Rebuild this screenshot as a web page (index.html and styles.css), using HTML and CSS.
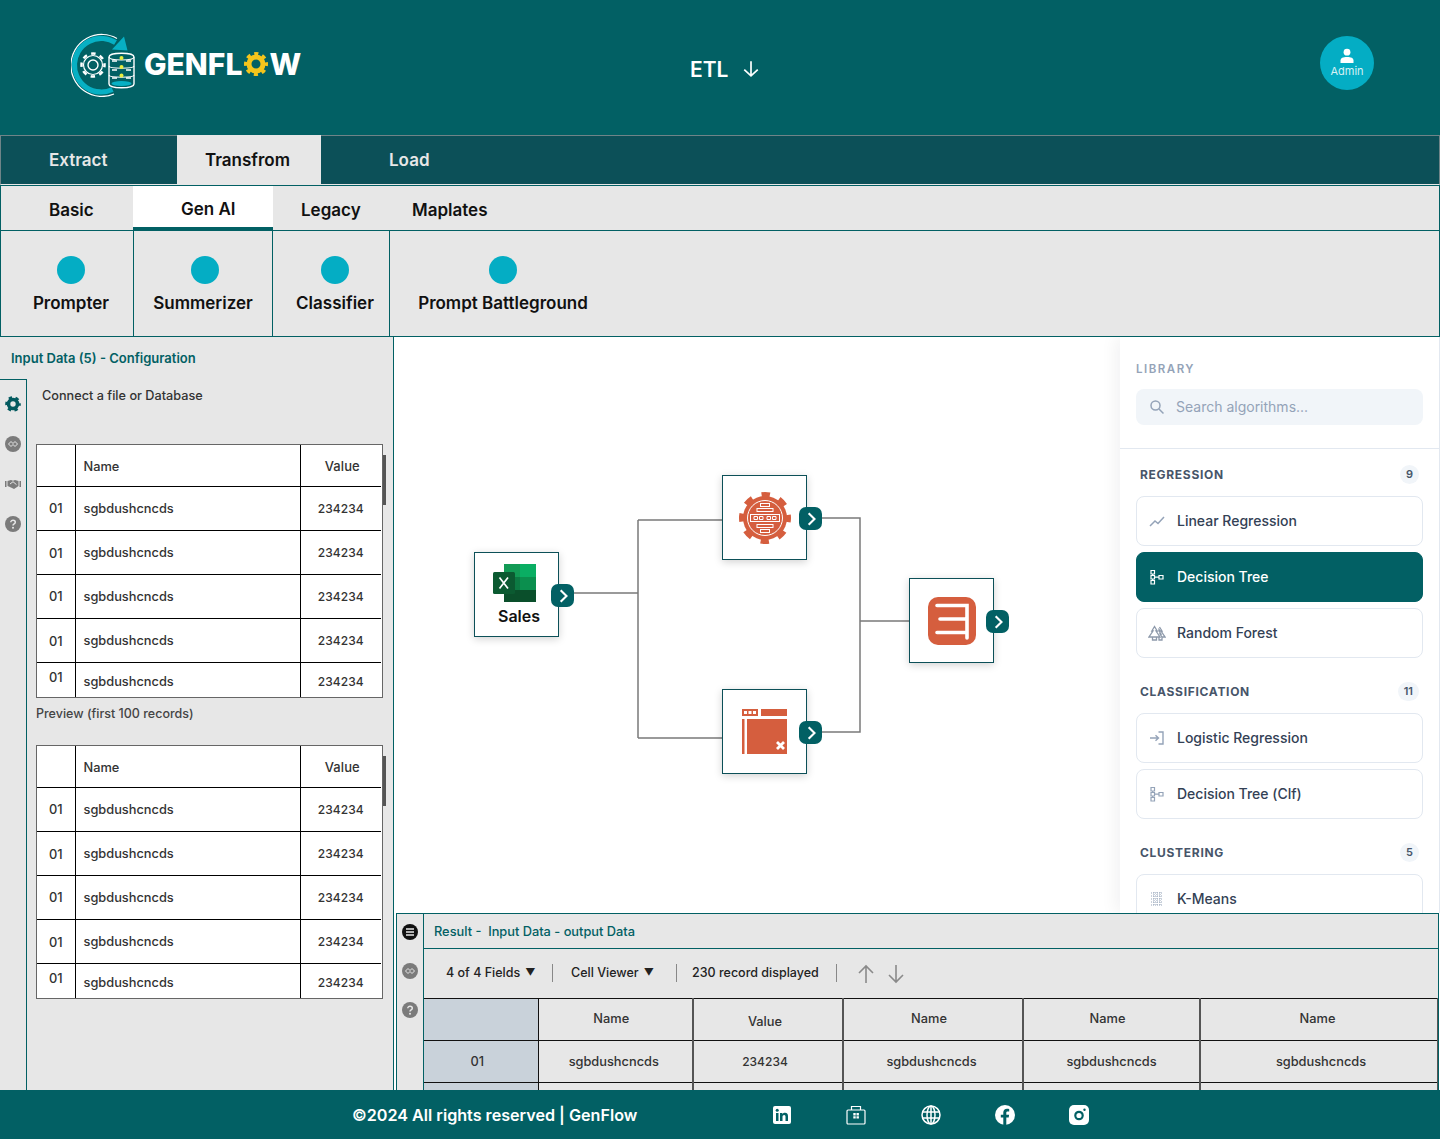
FILE: index.html
```html
<!DOCTYPE html>
<html lang="en">
<head>
	<meta charset="UTF-8">
	<title>GenFlow - ETL</title>
	<link rel="stylesheet" href="styles.css">
</head>
<body>
<div class="app">
	<header class="top">
		<a class="logo" href="#">
			<svg class="logo-mark" viewBox="0 0 64 64" width="64" height="64" fill="none">
				<path d="M43 61A31 31 0 1 1 46 5.400" stroke="#fff" stroke-width="1.200"/>
				<path d="M41.500 56.500A26.800 26.800 0 1 1 44.500 9.500" stroke="#07b0c4" stroke-width="5.200"/>
				<path d="M53 3.500 56.500 17.500 41 16.500Z" fill="#07b0c4"/>
				<circle cx="22" cy="32" r="9.500" stroke="#fff" stroke-width="1.200"/>
				<circle cx="22" cy="32" r="11.500" stroke="#fff" stroke-width="2.500" stroke-dasharray="4.500 4.530" stroke-dashoffset="2.200"/>
				<circle cx="22" cy="32" r="5" stroke="#fff" stroke-width="1.400"/>
				<path d="M38 24c0-5 25-5 25 0v27c0 5-25 5-25 0Z" stroke="#fff" stroke-width="1.400" fill="#026064"/>
				<path d="M38 24c0 4 25 4 25 0M38 33c0 3 25 3 25 0M38 42c0 3 25 3 25 0" stroke="#fff" stroke-width="1.100"/>
				<path d="M41 28h5M55 28h5M41 37h5M55 37h5M41 45h5M55 45h5" stroke="#fff" stroke-width="1.300"/>
				<circle cx="50.500" cy="25" r="2" fill="#e9ee3f"/>
				<circle cx="50.500" cy="34" r="2" fill="#e9ee3f"/>
				<circle cx="50.500" cy="42.500" r="2" fill="#e9ee3f"/>
				<ellipse cx="50.500" cy="50.500" rx="10" ry="2.600" fill="#07b0c4"/>
			</svg>
			<span class="logo-text">GENFL<svg class="logo-gear" viewBox="0 0 24 24" width="24" height="24" fill="none">
				<circle cx="12" cy="12" r="7" stroke="#f4c51c" stroke-width="5"/>
				<circle cx="12" cy="12" r="10" stroke="#f4c51c" stroke-width="4" stroke-dasharray="4 3.850" stroke-dashoffset="2"/>
			</svg>W</span>
		</a>
		<div class="etl">
			<span>ETL</span>
			<svg viewBox="0 0 16 16" width="18" height="18" fill="none" stroke="#fff" stroke-width="1.500"><path d="M8 1v13M2 8.500 8 14l6-5.500"/></svg>
		</div>
		<div class="admin">
			<svg viewBox="0 0 16 16" width="16" height="16" fill="#fff"><circle cx="8" cy="4.200" r="3.400"/><path d="M1.500 15v-2.500C1.500 10 4 9 8 9s6.500 1 6.500 3.500V15Z"/></svg>
			<span>Admin</span>
		</div>
	</header>

	<nav class="main-tabs">
		<a class="main-tab tab-extract" href="#">Extract</a>
		<a class="main-tab tab-transform active" href="#">Transfrom</a>
		<a class="main-tab tab-load" href="#">Load</a>
	</nav>

	<nav class="sub-tabs">
		<a class="sub-tab tab-basic" href="#">Basic</a>
		<a class="sub-tab tab-genai active" href="#">Gen AI</a>
		<a class="sub-tab tab-legacy" href="#">Legacy</a>
		<a class="sub-tab" href="#">Maplates</a>
	</nav>

	<div class="tools">
		<div class="tool tool-1"><i class="dot"></i><span>Prompter</span></div>
		<div class="tool tool-2"><i class="dot"></i><span>Summerizer</span></div>
		<div class="tool tool-3"><i class="dot"></i><span>Classifier</span></div>
		<div class="tool tool-4"><i class="dot"></i><span>Prompt Battleground</span></div>
	</div>

	<main class="main">
		<aside class="config">
			<h2 class="config-title">Input Data (5) - Configuration</h2>
			<div class="config-body">
				<div class="rail">
					<svg class="ico" viewBox="0 0 16 16"><circle cx="8" cy="8" r="4.500" fill="none" stroke="#035a5f" stroke-width="3.600"/><circle cx="8" cy="8" r="6.300" fill="none" stroke="#035a5f" stroke-width="3" stroke-dasharray="3.200 3.400" stroke-dashoffset="1.600"/></svg>
					<svg class="ico" viewBox="0 0 16 16"><circle cx="8" cy="8" r="8" fill="#7b7b7b"/><path d="M3.500 8 6 5.500 8 7.500 10 5.500 12.500 8 10 10.500 8 8.500 6 10.500Z" fill="none" stroke="#e7e7e7" stroke-width="1"/></svg>
					<svg class="ico" viewBox="0 0 16 16"><path d="M0 5h1.500v6H0ZM14.500 5H16v6h-1.500Z" fill="#7b7b7b"/><path d="M2.500 5 6 4l2 .8L10 4l3.500 1v5L9 13 6 11.500 2.500 10Z" fill="#7b7b7b"/><path d="M5 8l3-2.300 3.500 3" fill="none" stroke="#e7e7e7" stroke-width="1"/></svg>
					<svg class="ico" viewBox="0 0 16 16"><circle cx="8" cy="8" r="8" fill="#7b7b7b"/><path d="M5.800 6.200C5.800 3.600 10.300 3.700 10.300 6.200 10.300 7.900 8 7.700 8 9.500" fill="none" stroke="#e7e7e7" stroke-width="1.500"/><circle cx="8" cy="11.800" r="1" fill="#e7e7e7"/></svg>
				</div>
				<div class="config-main">
					<p class="connect">Connect a file or Database</p>
					<div class="grid-box">
						<div class="grid-clip">
							<table class="grid">
								<tr class="head"><th></th><th class="left">Name</th><th>Value</th></tr>
								<tr><td>01</td><td class="left">sgbdushcncds</td><td>234234</td></tr>
								<tr><td class="low">01</td><td class="left">sgbdushcncds</td><td>234234</td></tr>
								<tr><td>01</td><td class="left">sgbdushcncds</td><td>234234</td></tr>
								<tr><td class="low">01</td><td class="left">sgbdushcncds</td><td>234234</td></tr>
								<tr class="cut"><td class="high">01</td><td class="left">sgbdushcncds</td><td>234234</td></tr>
							</table>
						</div>
						<i class="thumb"></i>
					</div>
					<p class="preview">Preview (first 100 records)</p>
					<div class="grid-box">
						<div class="grid-clip">
							<table class="grid">
								<tr class="head"><th></th><th class="left">Name</th><th>Value</th></tr>
								<tr><td>01</td><td class="left">sgbdushcncds</td><td>234234</td></tr>
								<tr><td class="low">01</td><td class="left">sgbdushcncds</td><td>234234</td></tr>
								<tr><td>01</td><td class="left">sgbdushcncds</td><td>234234</td></tr>
								<tr><td class="low">01</td><td class="left">sgbdushcncds</td><td>234234</td></tr>
								<tr class="cut"><td class="high">01</td><td class="left">sgbdushcncds</td><td>234234</td></tr>
							</table>
						</div>
						<i class="thumb"></i>
					</div>
				</div>
			</div>
		</aside>

		<section class="work">
			<div class="canvas">
				<svg class="wires" width="1046" height="576" fill="none" stroke="#7a7a7a" stroke-width="1.500">
					<path d="M180 256H244M244 183V401M244 183H328M244 401H328"/>
					<path d="M427 181H466V395H427M466 284H515"/>
				</svg>

				<div class="node node-sales">
					<svg class="excel" viewBox="0 0 43 38" width="43" height="38">
						<rect x="11" width="16" height="13" fill="#129a55"/>
						<rect x="27" width="16" height="13" fill="#0aae63"/>
						<rect x="11" y="13" width="16" height="13" fill="#0c7a43"/>
						<rect x="27" y="13" width="16" height="13" fill="#0b8f4e"/>
						<rect x="11" y="26" width="32" height="12" fill="#0a4f2b"/>
						<rect y="8" width="22" height="22" rx="1.500" fill="#0b5a31"/>
						<path d="M6.500 13.500l8.500 11M15 13.500l-8.500 11" stroke="#fff" stroke-width="1.700"/>
					</svg>
					<span>Sales</span>
					<a class="port" href="#"><svg viewBox="0 0 12 12" width="14" height="14" fill="none" stroke="#fff" stroke-width="1.800"><path d="M4 1l5 5-5 5"/></svg></a>
				</div>

				<div class="node node-gear">
					<svg viewBox="0 0 52 52" width="52" height="52" fill="none">
						<circle cx="26" cy="26" r="22" fill="#d55e3e"/>
						<circle cx="26" cy="26" r="23.500" stroke="#d55e3e" stroke-width="5" stroke-dasharray="8.500 9.960" stroke-dashoffset="4.250"/>
						<circle cx="26" cy="26" r="17.500" stroke="#fff" stroke-width="1"/>
						<g stroke="#fff" stroke-width="1">
							<rect x="21.500" y="11.500" width="9" height="3"/>
							<rect x="18" y="16.500" width="16" height="3"/>
							<rect x="11.500" y="22.500" width="29" height="7"/>
							<rect x="18" y="32.500" width="16" height="3"/>
							<rect x="21.500" y="37.500" width="9" height="3"/>
							<path d="M15 24.500h3.500v3H15ZM20.500 24.500H24v3h-3.500ZM28 24.500h3.500v3H28ZM33.500 24.500H37v3h-3.500Z"/>
						</g>
					</svg>
					<a class="port" href="#"><svg viewBox="0 0 12 12" width="14" height="14" fill="none" stroke="#fff" stroke-width="1.800"><path d="M4 1l5 5-5 5"/></svg></a>
				</div>

				<div class="node node-out">
					<svg viewBox="0 0 48 48" width="48" height="48" fill="none">
						<rect width="48" height="48" rx="10" fill="#d55e3e"/>
						<path d="M9 8.500H39V41M12 22H37M9 35.500H39" stroke="#fff" stroke-width="3.600" stroke-linecap="round"/>
					</svg>
					<a class="port" href="#"><svg viewBox="0 0 12 12" width="14" height="14" fill="none" stroke="#fff" stroke-width="1.800"><path d="M4 1l5 5-5 5"/></svg></a>
				</div>

				<div class="node node-win">
					<svg viewBox="0 0 45 45" width="45" height="45" fill="none">
						<rect width="16" height="7" fill="#d55e3e"/>
						<rect x="19" width="26" height="7" fill="#d55e3e"/>
						<rect y="10" width="2.500" height="35" fill="#d55e3e"/>
						<rect x="5" y="10" width="40" height="35" fill="#d55e3e"/>
						<path d="M2 2h3v3H2ZM6.500 2h3v3h-3ZM11 2h3v3h-3Z" fill="#fff"/>
						<path d="M35 33l7 7M42 33l-7 7" stroke="#fff" stroke-width="2.800"/>
					</svg>
					<a class="port" href="#"><svg viewBox="0 0 12 12" width="14" height="14" fill="none" stroke="#fff" stroke-width="1.800"><path d="M4 1l5 5-5 5"/></svg></a>
				</div>

				<aside class="library">
					<div class="lib-top">
						<h3 class="lib-title">LIBRARY</h3>
						<div class="search">
							<svg viewBox="0 0 16 16" width="16" height="16" fill="none" stroke="#94a3b8" stroke-width="1.500"><circle cx="6.500" cy="6.500" r="4.500"/><path d="M10 10l4.500 4.500"/></svg>
							<span>Search algorithms...</span>
						</div>
					</div>
					<div class="lib-list">
						<div class="lib-head"><span>REGRESSION</span><b>9</b></div>
						<div class="algo">
							<svg viewBox="0 0 18 18" fill="none" stroke="#94a3b8" stroke-width="1.500"><path d="M2 14l5-5 3 2.500L16 5"/></svg>
							<span>Linear Regression</span>
						</div>
						<div class="algo active">
							<svg viewBox="0 0 18 18" fill="none" stroke="#fff" stroke-width="1.200"><path d="M3 2.500h3.500V6H3ZM3 7.500h3.500V11H3ZM3 12.500h3.500V16H3ZM11 7.500h4V11h-4ZM4.700 6v1.500M4.700 11v1.500M6.500 9.200H11"/></svg>
							<span>Decision Tree</span>
						</div>
						<div class="algo">
							<svg viewBox="0 0 18 18" fill="none" stroke="#8d99aa" stroke-width="1.300"><path d="M6.500 2.500 3.800 7H5L1 13h11L8 7h1.200ZM10.500 4.500 12 7h-1l2 3h-1l2 3h3l-4-6h1l-2.500-4M4.500 13v3h4v-3M11 13v3h3v-3"/></svg>
							<span>Random Forest</span>
						</div>

						<div class="lib-head"><span>CLASSIFICATION</span><b>11</b></div>
						<div class="algo">
							<svg viewBox="0 0 18 18" fill="none" stroke="#94a3b8" stroke-width="1.400"><path d="M2 9h8M7.500 6.200 10.500 9l-3 2.800M10.500 3H15v12h-4.500"/></svg>
							<span>Logistic Regression</span>
						</div>
						<div class="algo">
							<svg viewBox="0 0 18 18" fill="none" stroke="#94a3b8" stroke-width="1.200"><path d="M3 2.500h3.500V6H3ZM3 7.500h3.500V11H3ZM3 12.500h3.500V16H3ZM11 7.500h4V11h-4ZM4.700 6v1.500M4.700 11v1.500M6.500 9.200H11"/></svg>
							<span>Decision Tree (Clf)</span>
						</div>

						<div class="lib-head"><span>CLUSTERING</span><b>5</b></div>
						<div class="algo">
							<svg viewBox="0 0 18 18" fill="none" stroke="#94a3b8" stroke-width="1" stroke-dasharray="1 1"><path d="M3 3h12M3 6h12M3 9h12M3 12h12M3 15h12M6 2v14M9 2v14M12 2v14"/></svg>
							<span>K-Means</span>
						</div>
					</div>
				</aside>
			</div>

			<div class="result">
				<div class="rail result-rail">
					<svg class="ico" viewBox="0 0 16 16"><circle cx="8" cy="8" r="8" fill="#111"/><path d="M4 5h8M4 8h8M4 11h8" stroke="#e7e7e7" stroke-width="1.400"/></svg>
					<svg class="ico" viewBox="0 0 16 16"><circle cx="8" cy="8" r="8" fill="#7b7b7b"/><path d="M3.500 8 6 5.500 8 7.500 10 5.500 12.500 8 10 10.500 8 8.500 6 10.500Z" fill="none" stroke="#e7e7e7" stroke-width="1"/></svg>
					<svg class="ico" viewBox="0 0 16 16"><circle cx="8" cy="8" r="8" fill="#7b7b7b"/><path d="M5.800 6.200C5.800 3.600 10.300 3.700 10.300 6.200 10.300 7.900 8 7.700 8 9.500" fill="none" stroke="#e7e7e7" stroke-width="1.500"/><circle cx="8" cy="11.800" r="1" fill="#e7e7e7"/></svg>
				</div>
				<div class="result-main">
					<div class="result-title">Result -&nbsp; Input Data - output Data</div>
					<div class="toolbar">
						<span class="tb-item tb-fields">4 of 4 Fields <i>▼</i></span>
						<span class="tb-item tb-cell">Cell Viewer <i>▼</i></span>
						<span class="tb-item tb-count">230 record displayed</span>
						<span class="tb-arrows">
							<svg viewBox="0 0 16 20" width="16" height="20" fill="none" stroke="#8a8a8a" stroke-width="1.600"><path d="M8 19V2M1 9l7-7 7 7"/></svg>
							<svg viewBox="0 0 16 20" width="16" height="20" fill="none" stroke="#8a8a8a" stroke-width="1.600"><path d="M8 1v17M1 11l7 7 7-7"/></svg>
						</span>
					</div>
					<table class="rtable">
						<colgroup><col class="c1"><col class="c2"><col class="c3"><col class="c4"><col class="c5"><col class="c6"></colgroup>
						<tr><th class="idx"></th><th class="nudge">Name</th><th class="drop">Value</th><th class="nudge">Name</th><th class="nudge">Name</th><th class="plain">Name</th></tr>
						<tr><td class="idx">01</td><td>sgbdushcncds</td><td class="num">234234</td><td>sgbdushcncds</td><td class="plain">sgbdushcncds</td><td class="plain">sgbdushcncds</td></tr>
						<tr><td class="idx">&nbsp;</td><td></td><td></td><td></td><td></td><td></td></tr>
					</table>
				</div>
			</div>
		</section>
	</main>

	<footer class="foot">
		<span class="copy">©2024 All rights reserved | GenFlow</span>
		<div class="socials">
			<a href="#"><svg viewBox="0 0 20 20" width="20" height="20"><rect width="18" height="18" x="1" y="1" rx="2" fill="#fff"/><path d="M4 8h2.500v8H4ZM8 8h2.400v1.200C11 8.300 12 7.800 13 7.800c2.200 0 3 1.400 3 3.600V16h-2.500v-4.200c0-1.100-.4-1.800-1.300-1.800-1 0-1.700.7-1.700 1.900V16H8Z" fill="#026064"/><circle cx="5.200" cy="5.200" r="1.500" fill="#026064"/></svg></a>
			<a href="#"><svg viewBox="0 0 20 20" width="20" height="20" fill="none" stroke="#fff" stroke-width="1.200"><rect x="1" y="5" width="18" height="14" rx="1"/><path d="M5.500 5V1.500h9V5"/><path d="M7.300 8h2.400v2.400H7.300ZM10.500 8h2.400v2.400h-2.400ZM7.300 11.200h2.400v2.400H7.300ZM10.500 11.200h2.400v2.400h-2.400Z" fill="#fff" stroke="none"/></svg></a>
			<a href="#"><svg viewBox="0 0 20 20" width="20" height="20" fill="none" stroke="#fff" stroke-width="1.500"><circle cx="10" cy="10" r="9"/><ellipse cx="10" cy="10" rx="4" ry="9"/><path d="M1.500 7h17M1.500 13h17M10 1v18"/></svg></a>
			<a href="#"><svg viewBox="0 0 20 20" width="20" height="20"><circle cx="10" cy="10" r="10" fill="#fff"/><path d="M8.300 20v-7.500H5.800V9.700h2.500V7.500c0-2.500 1.500-3.800 3.700-3.800 1 0 1.900.1 2.200.2v2.500h-1.500c-1.200 0-1.400.6-1.400 1.400v1.900h2.800l-.4 2.800H11.300V20Z" fill="#026064"/></svg></a>
			<a href="#"><svg viewBox="0 0 20 20" width="20" height="20"><rect width="20" height="20" rx="5" fill="#fff"/><circle cx="10" cy="10.500" r="3.700" fill="none" stroke="#026064" stroke-width="2.200"/><circle cx="15.500" cy="4.700" r="1.200" fill="#026064"/></svg></a>
		</div>
	</footer>
</div>
</body>
</html>
```

FILE: styles.css
```css
*{
	margin: 0;
	padding: 0;
	box-sizing: border-box;
}
body{
	font-family: "Inter", "Liberation Sans", sans-serif;
	color: #111;
	background: #fff;
}
a{
	color: inherit;
	text-decoration: none;
}
.app{
	display: flex;
	flex-direction: column;
	width: 1440px;
	height: 1139px;
	overflow: hidden;
}

/* header */
.top{
	display: grid;
	grid-template-columns: 619px 1fr auto;
	align-items: center;
	height: 135px;
	padding: 0 66px 0 71px;
	background: #026064;
	color: #fff;
}
.logo{
	display: flex;
	align-items: center;
	gap: 10px;
	margin-top: -5px;
}
.logo-mark{
	flex: none;
}
.logo-text{
	display: flex;
	align-items: center;
	margin: -3px 0 0 -1px;
	font-size: 30px;
	font-weight: 800;
}
.logo-gear{
	margin: 0 1px 0 2px;
}
.etl{
	display: flex;
	align-items: center;
	gap: 14px;
	margin-top: 3px;
	font-size: 21px;
	font-weight: 600;
}
.admin{
	display: flex;
	flex-direction: column;
	align-items: center;
	justify-content: center;
	width: 54px;
	height: 54px;
	margin-top: -9px;
	border-radius: 50%;
	background: #04adc4;
	color: #d6f1f5;
	font-size: 11px;
}

/* tabs */
.main-tabs{
	display: flex;
	height: 50px;
	border: 1px solid #6f8488;
	border-bottom: 1px solid #e7e7e7;
	background: #0c5058;
	color: #e7e7e7;
	font-size: 17px;
	font-weight: 600;
}
.main-tab{
	display: flex;
	align-items: center;
}
.tab-extract{
	width: 176px;
	padding-left: 48px;
}
.tab-transform{
	width: 144px;
	margin-top: -1px;
	padding: 1px 0 0 28px;
}
.tab-load{
	padding-left: 68px;
}
.main-tab.active{
	background: #e7e7e7;
	color: #111;
}
.sub-tabs{
	display: flex;
	height: 45px;
	border: 1px solid #026064;
	border-bottom: 0;
	background: #e7e7e7;
	font-size: 17px;
	font-weight: 600;
}
.sub-tab{
	display: flex;
	align-items: center;
	padding-top: 4px;
}
.tab-basic{
	width: 132px;
	padding-left: 48px;
}
.tab-genai{
	width: 140px;
	padding-left: 48px;
}
.tab-legacy{
	width: 139px;
	padding-left: 28px;
}
.sub-tab.active{
	border-bottom: 3px solid #026064;
	background: #fff;
}
.tools{
	display: flex;
	height: 107px;
	border: 1px solid #026064;
	background: #e7e7e7;
	font-size: 17px;
	font-weight: 600;
}
.tool{
	display: flex;
	flex-direction: column;
	align-items: center;
	padding-top: 25px;
	border-right: 1px solid #026064;
	white-space: nowrap;
}
.tool .dot{
	width: 28px;
	height: 28px;
	margin-bottom: 9px;
	border-radius: 50%;
	background: #04adc4;
}
.tool-1{
	width: 133px;
	padding-left: 8px;
}
.tool-2{
	width: 139px;
}
.tool-2 .dot{
	margin-left: 4px;
}
.tool-3{
	width: 117px;
	padding-left: 8px;
}
.tool-4{
	width: 226px;
	border-right: 0;
}

/* main area */
.main{
	display: flex;
	flex: 1;
	min-height: 0;
}
.config{
	flex: none;
	width: 394px;
	border-right: 1px solid #026064;
	background: #e7e7e7;
}
.config-title{
	height: 42px;
	padding: 12px 0 0 11px;
	color: #026064;
	font-size: 13px;
	font-weight: 600;
	line-height: 18px;
}
.config-body{
	display: flex;
	height: 711px;
}
.rail{
	display: flex;
	flex-direction: column;
	flex: none;
	gap: 24px;
	width: 27px;
	padding: 16px 0 0 5px;
	border-top: 1px solid #026064;
	border-right: 1px solid #026064;
}
.ico{
	display: block;
	width: 16px;
	height: 16px;
}
.config-main{
	padding: 8px 0 0 9px;
}
.connect{
	margin: 0 0 39px 6px;
	color: #333;
	font-size: 12.700px;
	font-weight: 500;
	line-height: 18px;
}
.preview{
	margin: 7px 0 22px;
	color: #444;
	font-size: 12.500px;
	font-weight: 500;
	line-height: 18px;
}
.grid-box{
	position: relative;
	width: 347px;
	height: 254px;
}
.grid-clip{
	height: 100%;
	overflow: hidden;
	border: 1px solid #666;
	background: #fff;
}
.thumb{
	position: absolute;
	top: 11px;
	right: -3px;
	width: 3px;
	height: 50px;
	background: #555;
}
.grid{
	width: 344px;
	border-collapse: collapse;
	table-layout: fixed;
	color: #333;
	font-size: 12.800px;
	font-weight: 500;
}
.grid th,
.grid td{
	height: 44px;
	border-bottom: 1px solid #000;
	border-right: 1px solid #000;
	text-align: center;
	font-weight: 500;
}
.grid th:first-child,
.grid td:first-child{
	width: 38px;
}
.grid th:last-child,
.grid td:last-child{
	width: 81px;
	border-right: 0;
	font-size: 12px;
	letter-spacing: .1px;
}
.grid th:last-child{
	padding-left: 3px;
	font-size: 13px;
}
.grid .head th{
	height: 41px;
	padding-top: 2px;
}
.grid .left{
	padding-left: 8px;
	text-align: left;
}
.grid .cut td{
	height: 44px;
	padding-bottom: 6px;
	border-bottom: 0;
}
.grid .low{
	padding-top: 3px;
}
.grid .cut .high{
	padding-bottom: 13px;
}

/* canvas */
.work{
	display: flex;
	flex: 1;
	flex-direction: column;
	min-width: 0;
}
.canvas{
	position: relative;
	flex: 1;
	overflow: hidden;
	background: #fff;
}
.wires{
	position: absolute;
	left: 0;
	top: 0;
}
.node{
	position: absolute;
	display: flex;
	flex-direction: column;
	align-items: center;
	justify-content: center;
	width: 85px;
	height: 85px;
	border: 1px solid #0c5058;
	background: #fff;
	box-shadow: 0 2px 8px rgba(0,0,0,.18);
}
.node-sales{
	left: 80px;
	top: 215px;
	font-size: 16px;
	font-weight: 600;
}
.node-sales .excel{
	margin-left: -4px;
}
.node-sales span{
	margin: 4px 0 0 5px;
}
.node-gear{
	left: 328px;
	top: 138px;
}
.node-out{
	left: 515px;
	top: 241px;
}
.node-win{
	left: 328px;
	top: 352px;
}
.port{
	position: absolute;
	right: -16px;
	top: 31px;
	display: flex;
	align-items: center;
	justify-content: center;
	width: 23px;
	height: 23px;
	border-radius: 7px;
	background: #026064;
}

/* library */
.library{
	position: absolute;
	top: 0;
	right: 0;
	bottom: 0;
	width: 320px;
	border-right: 1px solid #e2e8f0;
	background: #fff;
	box-shadow: -4px 0 16px rgba(15,23,42,.06);
}
.lib-top{
	height: 112px;
	padding: 24px 16px 0;
	border-bottom: 1px solid #e2e8f0;
}
.lib-title{
	margin-bottom: 11px;
	color: #94a3b8;
	font-size: 11.500px;
	font-weight: 600;
	letter-spacing: 1.500px;
	line-height: 17px;
}
.search{
	display: flex;
	align-items: center;
	gap: 11px;
	width: 287px;
	height: 36px;
	padding: 0 0 2px 13px;
	border-radius: 8px;
	background: #f1f5f9;
	color: #94a3b8;
	font-size: 14px;
}
.search svg{
	margin-top: 2px;
}
.lib-list{
	padding: 0 16px;
}
.lib-head{
	display: flex;
	align-items: center;
	justify-content: space-between;
	width: 287px;
	height: 20px;
	margin: 23px 0 12px;
	padding: 0 4px;
	color: #475569;
	font-size: 12px;
	font-weight: 700;
	letter-spacing: .7px;
}
.lib-head:first-child{
	margin-top: 15px;
}
.lib-head b{
	min-width: 19px;
	height: 19px;
	padding: 0 6px;
	border-radius: 10px;
	background: #f1f5f9;
	font-size: 11px;
	font-weight: 600;
	letter-spacing: 0;
	line-height: 19px;
	text-align: center;
}
.algo{
	display: flex;
	align-items: center;
	gap: 11px;
	width: 287px;
	height: 50px;
	margin-bottom: 6px;
	padding: 0 0 2px 11px;
	border: 1px solid #e2e8f0;
	border-radius: 8px;
	background: #fff;
	color: #334155;
	font-size: 14px;
	font-weight: 500;
}
.algo svg{
	flex: none;
	width: 18px;
	height: 18px;
	margin-top: 2px;
}
.algo.active{
	border-color: #026064;
	background: #026064;
	color: #fff;
}

/* result panel */
.result{
	position: relative;
	display: flex;
	flex: none;
	height: 177px;
	margin: 0 1px 0 2px;
	overflow: hidden;
	border: 1px solid #026064;
	border-bottom: 0;
	background: #e7e7e7;
}
.result-rail{
	gap: 23px;
	padding: 10px 0 0 5px;
	border-top: 0;
}
.result-main{
	flex: 1;
	min-width: 0;
}
.result-title{
	height: 35px;
	padding-left: 10px;
	border-bottom: 1px solid #026064;
	color: #026064;
	font-size: 12.800px;
	font-weight: 500;
	line-height: 36px;
}
.toolbar{
	display: flex;
	align-items: center;
	height: 49px;
	color: #222;
	font-size: 12.500px;
	font-weight: 500;
}
.tb-item{
	display: flex;
	align-items: center;
	height: 18px;
	margin-bottom: 1px;
	padding-bottom: 2px;
	white-space: nowrap;
}
.tb-item i{
	margin-left: 5px;
	font-size: 10px;
	font-style: normal;
}
.tb-fields{
	width: 129px;
	padding-left: 22px;
	border-right: 1px solid #888;
}
.tb-cell{
	width: 124px;
	padding-left: 18px;
	border-right: 1px solid #888;
}
.tb-count{
	width: 160px;
	padding-left: 15px;
	border-right: 1px solid #888;
}
.tb-arrows{
	display: flex;
	gap: 14px;
	margin-left: 21px;
}
.rtable{
	width: 1014px;
	border-collapse: collapse;
	table-layout: fixed;
	color: #333;
	font-size: 12.800px;
	font-weight: 500;
}
.rtable .c1{ width: 114px; }
.rtable .c2{ width: 155px; }
.rtable .c3{ width: 150px; }
.rtable .c4{ width: 180px; }
.rtable .c5{ width: 177px; }
.rtable .c6{ width: 238px; }
.rtable th,
.rtable td{
	height: 42px;
	padding-bottom: 3px;
	border-top: 1px solid #111;
	border-right: 2px solid #555;
	font-weight: 500;
	text-align: center;
}
.rtable td{
	padding-right: 3px;
	padding-bottom: 1px;
}
.rtable .idx{
	padding-right: 7px;
	border-right: 1px solid #111;
	background: #c9d2da;
}
.rtable .nudge{
	padding-right: 8px;
}
.rtable .plain{
	padding-right: 0;
}
.rtable th:last-child{
	padding-right: 3px;
}
.rtable td:last-child{
	padding-left: 4px;
}
.rtable .drop{
	padding: 3px 6px 0 0;
}
.rtable .num{
	padding-right: 6px;
	font-size: 12px;
}

/* footer */
.foot{
	display: flex;
	flex: none;
	align-items: center;
	height: 49px;
	padding-left: 352px;
	background: #026064;
	color: #fff;
	font-size: 16.150px;
	font-weight: 600;
}
.copy{
	width: 420px;
	white-space: nowrap;
}
.socials{
	display: flex;
	gap: 54.250px;
}
.socials a{
	display: block;
	width: 20px;
	height: 20px;
}
```
